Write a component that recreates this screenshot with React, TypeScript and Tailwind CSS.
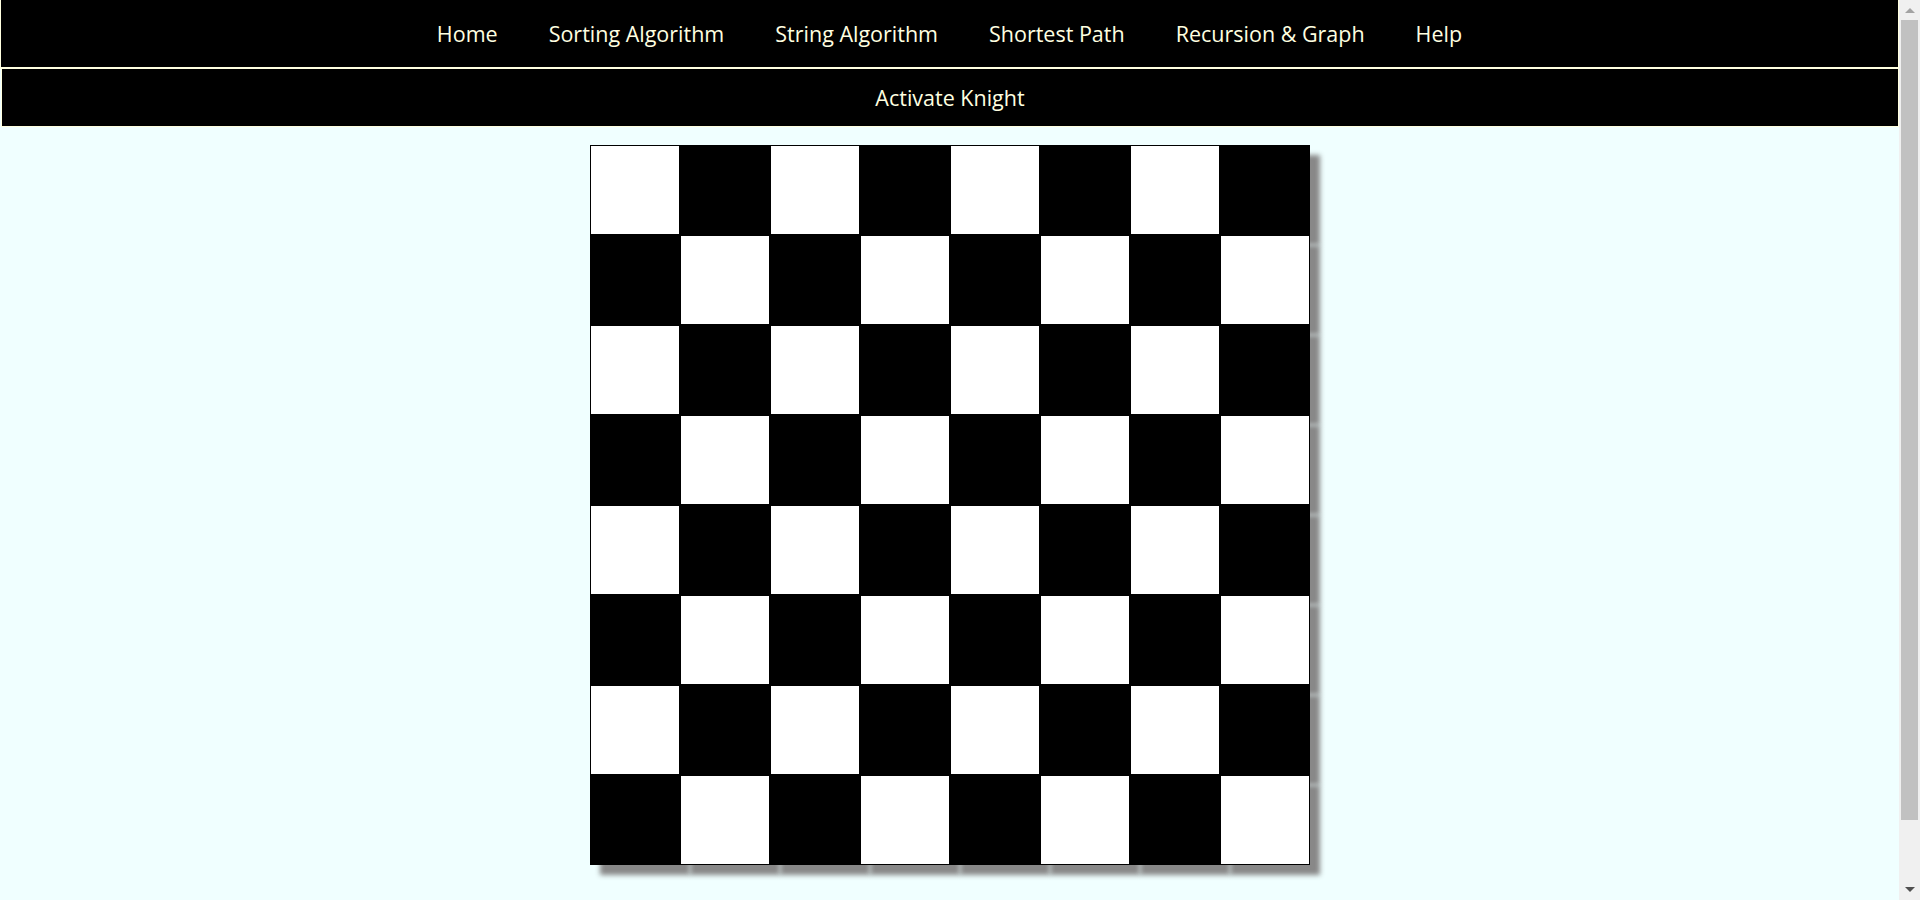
const links = [
  "Home",
  "Sorting Algorithm",
  "String Algorithm",
  "Shortest Path",
  "Recursion & Graph",
  "Help",
];

const Board = () => {
  const cells = [];
  for (let r = 0; r < 8; r++) {
    for (let c = 0; c < 8; c++) {
      const dark = (r + c) % 2 === 1;
      cells.push(
        <div
          key={r * 8 + c}
          className={`w-[90px] h-[90px] border border-black shadow-[10px_10px_5px_#888888] ${
            dark ? "bg-black" : "bg-white"
          }`}
        />
      );
    }
  }
  return <div className="grid grid-cols-8 w-[720px] mx-auto">{cells}</div>;
};

// classic windows-style scrollbar strip on the right
const ScrollStrip = () => (
  <div className="w-[21px] h-screen shrink-0 bg-[#f0f0f0] flex flex-col items-center">
    <div className="h-[20px] flex items-center justify-center">
      <div className="w-0 h-0 border-x-[5px] border-x-transparent border-b-[5px] border-b-[#a3a3a3]" />
    </div>
    <div className="w-[17px] h-[800px] bg-[#c1c1c1]" />
    <div className="flex-1 flex items-end justify-center pb-[8px]">
      <div className="w-0 h-0 border-x-[5px] border-x-transparent border-t-[5px] border-t-[#505050]" />
    </div>
  </div>
);

export default function App() {
  return (
    <div className="flex items-start bg-[#f0ffff]">
      <div className="flex-1 min-w-0 font-['Open_Sans',sans-serif] text-[#ffffe0] pb-[102px]">
        {/* top menu */}
        <nav className="h-[69px] bg-black border-x border-b-2 border-[#ffffe0] flex items-center justify-center">
          <ul className="flex items-center gap-[51px] text-[21.5px] mt-[2px]">
            {links.map((l) => (
              <li key={l} className="cursor-pointer">
                {l}
              </li>
            ))}
          </ul>
        </nav>

        {/* knight bar */}
        <div className="h-[58px] ml-px bg-black border-x border-b border-[#ffffe0] flex items-center justify-center">
          <button className="text-[21.5px] mt-[2px] cursor-pointer">Activate Knight</button>
        </div>

        <div className="mt-[18px]">
          <Board />
        </div>
      </div>
      <ScrollStrip />
    </div>
  );
}
